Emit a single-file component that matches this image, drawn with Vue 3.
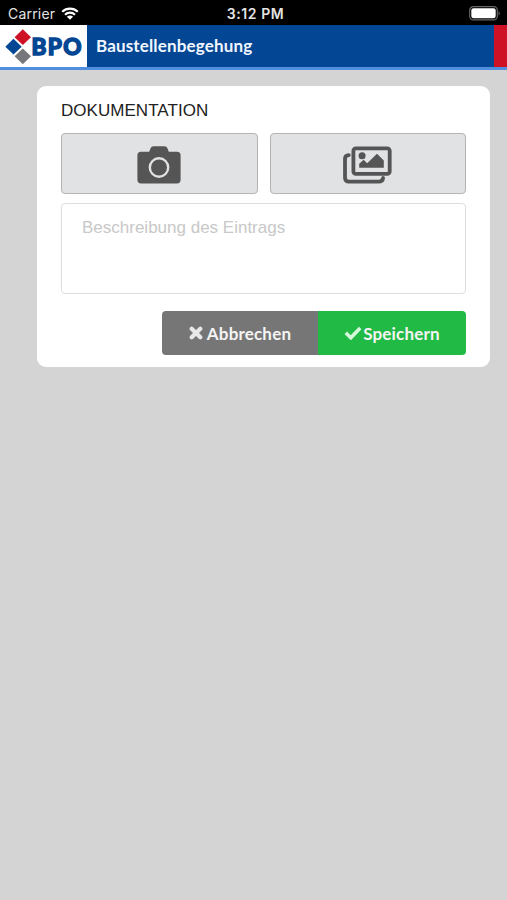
<template>
  <div class="screen">
    <div class="status-bar">
      <div class="carrier">
        <span class="carrier-name">Carrier</span>
        <svg class="wifi" viewBox="0 0 18 13">
          <path d="M1.2 4.8a11.2 11.2 0 0 1 15.6 0" />
          <path d="M4 7.7a7.2 7.2 0 0 1 10 0" />
          <path class="wifi-dot" d="M9 12.8L5.9 9.8a4.4 4.4 0 0 1 6.2 0z" />
        </svg>
      </div>
      <span class="time">3:12 PM</span>
      <svg class="battery" viewBox="0 0 32 15">
        <rect x="0.7" y="0.7" width="27.6" height="13.2" rx="3.6" fill="none" stroke="#666" stroke-width="1.2" />
        <rect x="2.3" y="2.3" width="24.4" height="10" rx="2.2" fill="#fff" />
        <path d="M29.6 5.2c1.4.5 1.4 3.9 0 4.4z" fill="#777" />
      </svg>
    </div>

    <header class="header">
      <div class="logo">
        <svg class="logo-mark" viewBox="0 0 28 36">
          <path d="M17.8 1.3l8.2 7.9-8.2 7.9-8.2-7.9z" fill="#cf1125" />
          <path d="M8.5 10.8l8.2 7.9-8.2 7.9-8.2-7.9z" fill="#034694" />
          <path d="M17.8 20.4l8.2 7.9-8.2 7.9-8.2-7.9z" fill="#75777a" />
        </svg>
        <span class="logo-text">BPO</span>
      </div>
      <h1 class="title">Baustellenbegehung</h1>
      <div class="red-stripe"></div>
    </header>

    <main class="card">
      <h2 class="card-title">DOKUMENTATION</h2>
      <div class="media-row">
        <button class="media-button" aria-label="Kamera">
          <svg class="camera" viewBox="0 0 44 38">
            <path
              d="M4 5.8h8.2l1.6-4Q14.5.2 16.4.2h11.2q1.9 0 2.6 1.6l1.6 4H40q3.6 0 3.6 3.6v24.4q0 3.6-3.6 3.6H4Q.4 37.4.4 33.8V9.4Q.4 5.8 4 5.8z"
              fill="#555"
            />
            <circle cx="22" cy="21.5" r="9.2" fill="none" stroke="#e0e2e4" stroke-width="2.4" />
          </svg>
        </button>
        <button class="media-button" aria-label="Galerie">
          <svg class="gallery" viewBox="0 0 49 38">
            <path class="gallery-back" d="M5.8 9.2Q2 9.4 2 13v18.5q0 4.100 4 4.100h29.500q4.200 0 4.600-3.600" />
            <rect class="gallery-front" x="10.4" y="2.3" width="36.3" height="25.5" rx="2.4" />
            <circle cx="19.1" cy="9.7" r="3.5" fill="#555" />
            <path d="M16.2 21.7v-4l4.400-4 3.600 3.500 9.800-9.400 6.800 6.700v7.200z" fill="#555" />
          </svg>
        </button>
      </div>
      <textarea v-model="description" class="description" placeholder="Beschreibung des Eintrags"></textarea>
      <div class="actions">
        <button class="action cancel" @click="description = ''">
          <svg class="cross" viewBox="0 0 14 14">
            <path d="M2.7 2.7l8.6 8.6M11.3 2.7l-8.6 8.6" />
          </svg>
          <span class="cancel-label">Abbrechen</span>
        </button>
        <button class="action save">
          <svg class="check" viewBox="0 0 18 14">
            <path d="M1.8 6.8l5 5L16.2 2" />
          </svg>
          <span class="save-label">Speichern</span>
        </button>
      </div>
    </main>
  </div>
</template>

<script setup>
import { ref } from 'vue'

const description = ref('')
</script>

<style>
body {
  background-color: #d4d4d4;
}
</style>

<style scoped>
* {
  box-sizing: border-box;
}
.screen {
  min-height: 900px;
  background-color: #d4d4d4;
  font-family: Lato, sans-serif;
}
.status-bar {
  display: grid;
  grid-template-columns: 1fr auto 1fr;
  align-items: center;
  height: 25px;
  padding: 2px 6px 0 8px;
  background-color: #000;
  color: #e4e4e4;
  font-family: Inter, sans-serif;
  font-size: 14px;
}
.carrier {
  display: flex;
  align-items: center;
  gap: 6px;
}
.carrier-name {
  letter-spacing: 0.2px;
}
.wifi {
  width: 18px;
  height: 13px;
  fill: none;
  stroke: #fff;
  stroke-width: 2.2;
}
.wifi-dot {
  fill: #fff;
  stroke: none;
}
.time {
  padding-left: 2px;
  font-weight: 600;
  letter-spacing: 0.6px;
}
.battery {
  justify-self: end;
  width: 32px;
  height: 15px;
}
.header {
  display: flex;
  height: 45px;
  background-color: #034694;
  border-bottom: 3px solid #4f8fdd;
}
.logo {
  display: flex;
  align-items: center;
  width: 87px;
  padding-left: 5px;
  background-color: #fff;
}
.logo-mark {
  flex: none;
  width: 28px;
  height: 36px;
}
.logo-text {
  margin-left: -1.5px;
  color: #034694;
  font-size: 22.5px;
  font-weight: 900;
  letter-spacing: 1.3px;
  -webkit-text-stroke: 1.4px #034694;
}
.title {
  flex: 1;
  margin: 0;
  padding-left: 9px;
  color: #f1f6ff;
  font-size: 17px;
  font-weight: 700;
  letter-spacing: 0.15px;
  line-height: 42px;
}
.red-stripe {
  width: 13px;
  background-color: #cf1125;
}
.card {
  width: 453px;
  height: 281px;
  margin: 16px 0 0 37px;
  padding: 15px 24px 0;
  background-color: #fff;
  border-radius: 9px;
}
.card-title {
  margin: 0 0 12px;
  color: #222;
  font-family: 'Liberation Sans', sans-serif;
  font-size: 17px;
  font-weight: 400;
  letter-spacing: 0.04px;
  line-height: 20px;
}
.media-row {
  display: flex;
  gap: 12px;
}
.media-button {
  display: flex;
  flex: 1;
  align-items: center;
  justify-content: center;
  height: 61px;
  padding: 2px 0 0;
  background-color: #e0e2e4;
  border: 1px solid #b2b4b5;
  border-radius: 4px;
}
.camera {
  width: 44px;
  height: 38px;
}
.gallery {
  width: 49px;
  height: 38px;
}
.gallery-back,
.gallery-front {
  fill: none;
  stroke: #555;
  stroke-width: 3.8;
}
.gallery-back {
  stroke-linecap: round;
}
.description {
  display: block;
  width: 100%;
  height: 91px;
  margin-top: 9px;
  padding: 14px 20px;
  border: 1px solid #dedede;
  border-radius: 4px;
  resize: none;
  font-family: 'Liberation Sans', sans-serif;
  font-size: 17px;
  line-height: 20px;
}
.description::placeholder {
  color: #c8c8c8;
}
.actions {
  display: flex;
  justify-content: flex-end;
  margin-top: 17px;
}
.action {
  display: flex;
  align-items: center;
  justify-content: center;
  height: 44px;
  padding: 0;
  border: none;
  color: #f4f4f4;
  font-family: Lato, sans-serif;
  font-size: 17px;
  font-weight: 700;
  letter-spacing: 0.18px;
}
.cancel {
  width: 156px;
  gap: 4px;
  background-color: #767676;
  border-radius: 4px 0 0 4px;
}
.save {
  width: 148px;
  gap: 1px;
  background-color: #21ba45;
  border-radius: 0 4px 4px 0;
}
.cross,
.check {
  fill: none;
  stroke: #e8e8e8;
}
.cross {
  width: 14px;
  height: 14px;
  stroke-width: 4.2;
  stroke-linecap: round;
}
.check {
  width: 18px;
  height: 14px;
  stroke: #d3f8dc;
  stroke-width: 3.6;
}
</style>
